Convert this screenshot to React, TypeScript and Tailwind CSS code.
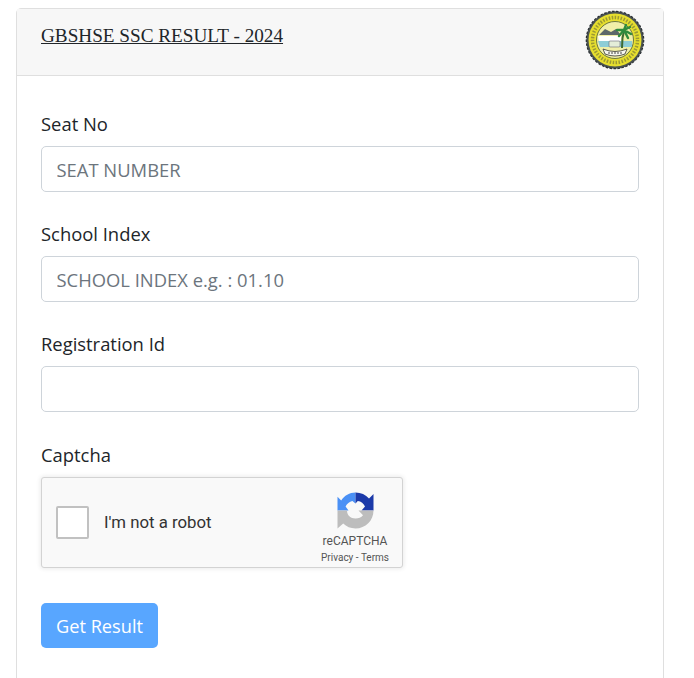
import React from 'react';

const fields = [
  { label: 'Seat No', placeholder: 'SEAT NUMBER' },
  { label: 'School Index', placeholder: 'SCHOOL INDEX e.g. : 01.10' },
  { label: 'Registration Id', placeholder: '' },
];

const Seal: React.FC = () => (
  <svg width="60" height="60" viewBox="0 0 60 60" className="shrink-0">
    <circle cx="30" cy="30" r="28.7" fill="#4a5252" stroke="#2a2f33" strokeWidth="1.2" strokeDasharray="2.5 1.5" />
    <circle cx="30" cy="30" r="26.5" fill="#e6de2e" />
    <circle cx="30" cy="30" r="22.5" fill="none" stroke="#5d6038" strokeWidth="3.5" strokeDasharray="1.5 1.5" opacity="0.55" />
    <circle cx="30" cy="30" r="18.5" fill="#f1efa8" stroke="#4a5a3a" strokeWidth="0.8" />
    <path d="M14 25 L20 19 L26 22 L31 19 L36 25 Z" fill="#5d686a" />
    <path d="M13 26 H36 V31 H14 Z" fill="#ffffff" />
    <path d="M13 31 H47 V37 H15 Z" fill="#8ecdd6" />
    <path d="M37 38 L37.5 28 L39 21" fill="none" stroke="#3e6b33" strokeWidth="2" />
    <path d="M39 20 L32 20 M39 20 L45 17 M39 20 L46 24 M39 20 L34 26 M39 20 L41 15 M39 20 L43 28" stroke="#2f8a3c" strokeWidth="2.4" strokeLinecap="round" />
    <rect x="24" y="31" width="11" height="6" rx="1" fill="#e4edd8" stroke="#667" strokeWidth="0.6" />
    <path d="M18 39 Q30 44 42 39 L40 44 Q30 48 20 44 Z" fill="#f7f7ef" stroke="#333" strokeWidth="0.8" />
    <path d="M23 43 H37" stroke="#444" strokeWidth="1" strokeDasharray="2 1" />
  </svg>
);

const RecaptchaLogo: React.FC = () => (
  <svg width="37" height="37" viewBox="0 0 37 37">
    <path d="M18.5 0.5 C12.5 0.5 7.4 3.6 4.2 8.4 L0.5 4.8 V18.5 H11.5 L8.6 14.6 C10 11.6 12.4 9.6 15.4 9 L18.5 11.5 Z" fill="#4a90f5" />
    <path d="M18.5 0.5 C24 0.5 28.6 2.8 32 6.6 L36.5 2 V18.5 H24.5 L28 14.6 C26.8 11.6 24 9.4 20.8 9 L18.5 11.5 Z" fill="#1c3aa9" />
    <path d="M0.5 18.5 H10 C10 23.4 13.6 26.5 18.5 26.5 C21.6 26.5 24.2 25.4 26 23.2 L21.5 18.5 H36.5 C36.5 28.6 28.5 36.5 18.5 36.5 C13.6 36.5 9.4 34.8 6.2 31.6 L0.5 36.5 Z" fill="#bdbdbd" />
  </svg>
);

const App: React.FC = () => {
  return (
    <div className="h-[678px] overflow-hidden bg-white px-4 pt-2 font-['Open_Sans','Noto_Sans',sans-serif] text-[#212529]">
      <div className="h-[720px] w-[648px] rounded-[5px] border border-[#dfdfdf]">
        <div className="flex h-[67px] items-start justify-between border-b border-[#dfdfdf] bg-[#f7f7f7] pl-6 pr-[18px] pt-[1px]">
          <h5 className="mt-[14px] font-['Liberation_Serif',serif] text-[19.2px] leading-[24px] underline">
            GBSHSE SSC RESULT - 2024
          </h5>
          <Seal />
        </div>

        <div className="flex flex-col px-6 pt-[33.6px]">
          {fields.map((f, i) => (
            <div key={f.label} className={i === 2 ? 'mb-[28.6px] flex flex-col' : 'mb-[27.6px] flex flex-col'}>
              <label className="mb-[8px] text-[18.4px] leading-[28.8px]">{f.label}</label>
              <input
                placeholder={f.placeholder}
                className="h-[45.6px] w-full rounded-[5px] border border-[#ced4da] bg-white px-[14.5px] pt-[1px] text-[18.4px] outline-none placeholder:text-[#6c757d]"
              />
            </div>
          ))}

          <label className="mb-[8px] text-[18.4px] leading-[28.8px]">Captcha</label>
          <div className="flex h-[91px] w-[362px] items-center justify-between rounded-[3px] border border-[#d3d3d3] bg-[#f9f9f9] pl-[14px] pr-[13px] shadow-[0_0_4px_1px_rgba(0,0,0,0.08)]">
            <div className="flex items-center gap-[15px]">
              <div className="h-[33px] w-[33px] rounded-[2px] border-2 border-[#c1c1c1] bg-white" />
              <span className="font-['Roboto',sans-serif] text-[16.8px] text-[#333]">I'm not a robot</span>
            </div>
            <div className="flex flex-col items-center pt-[11px] font-['Roboto',sans-serif] text-[#555]">
              <RecaptchaLogo />
              <span className="mt-[5px] text-[12px] leading-[15px]">reCAPTCHA</span>
              <span className="mt-[2px] text-[10px] leading-[13px]">Privacy - Terms</span>
            </div>
          </div>

          <button className="mt-[35px] h-[45px] w-[117px] rounded-[5px] bg-[#58a6ff] pt-[1px] text-[18.2px] text-white">
            Get Result
          </button>
        </div>
      </div>
    </div>
  );
};

export default App;
